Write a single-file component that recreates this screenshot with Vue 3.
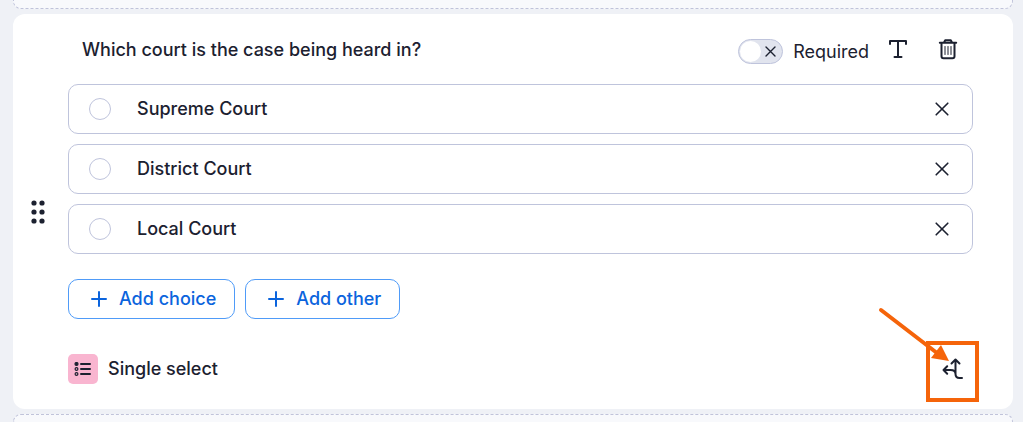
<template>
  <main class="builder">
    <div class="drop-zone drop-zone-top"></div>

    <section class="question-card">
      <button class="icon-btn drag-handle" type="button" aria-label="Move question">
        <svg width="16" height="24" viewBox="0 0 16 24" fill="currentColor">
          <template v-for="y in [3, 12, 21]" :key="y">
            <circle cx="4" :cy="y" r="2.6" />
            <circle cx="12" :cy="y" r="2.6" />
          </template>
        </svg>
      </button>

      <div class="question-body">
        <header class="question-header">
          <h2 class="question-title">Which court is the case being heard in?</h2>
          <div class="question-tools">
            <label class="required-toggle">
              <input v-model="required" class="toggle-input" type="checkbox" />
              <span class="toggle-track">
                <span class="toggle-knob"></span>
                <svg class="toggle-cross" width="11" height="11" viewBox="0 0 11 11">
                  <path d="M1 1l9 9M10 1l-9 9" />
                </svg>
              </span>
              <span>Required</span>
            </label>
            <button class="icon-btn" type="button" aria-label="Text format">
              <svg width="20" height="20" viewBox="0 0 20 20">
                <path d="M2 5V2h16v3M10 2v16M6.500 18h7" />
              </svg>
            </button>
            <button class="icon-btn" type="button" aria-label="Delete question">
              <svg width="20" height="22" viewBox="0 0 20 22">
                <path d="M1.800 4.800h16.400M6 4.500L7.200 2.200h5.600l1.200 2.300M3.500 4.800V18.200a2 2 0 0 0 2 2h9a2 2 0 0 0 2-2V4.800" />
                <path class="thin" d="M7 8.500v8M10 8.500v8M13 8.500v8" />
              </svg>
            </button>
          </div>
        </header>

        <ul class="choice-list">
          <li v-for="choice in choices" :key="choice.id" class="choice">
            <label class="choice-label">
              <input v-model="selected" class="choice-radio" type="radio" name="court" :value="choice.id" />
              <span>{{ choice.label }}</span>
            </label>
            <button class="icon-btn" type="button" :aria-label="'Remove ' + choice.label" @click="removeChoice(choice.id)">
              <svg width="14" height="14" viewBox="0 0 14 14">
                <path d="M1.200 1.200l11.600 11.600M12.800 1.200L1.200 12.800" />
              </svg>
            </button>
          </li>
        </ul>

        <div class="choice-actions">
          <button v-for="action in actions" :key="action" class="add-btn" type="button">
            <svg width="16" height="16" viewBox="0 0 16 16">
              <path d="M8 1v14M1 8h14" />
            </svg>
            {{ action }}
          </button>
        </div>

        <footer class="question-footer">
          <div class="question-type">
            <span class="type-icon">
              <svg width="18" height="14" viewBox="0 0 18 14">
                <path d="M7 2h9M7 7h9M7 12h9" />
                <circle class="filled" cx="2.500" cy="2" r="1.500" />
                <circle cx="2.500" cy="7" r="1.400" />
                <circle cx="2.500" cy="12" r="1.400" />
              </svg>
            </span>
            <span>Single select</span>
          </div>
          <div class="branching">
            <button class="icon-btn" type="button" aria-label="Branching logic">
              <svg width="22" height="22" viewBox="0 0 22 22">
                <path d="M20 20h-2.500c-2.500 0-4-1.500-4-4V2M9.500 5.500l4-4 4 4M1.500 12h7c3 0 5 1.200 5 4M5.200 8.300L1.500 12l3.700 3.700" />
              </svg>
            </button>
            <svg class="callout" width="103" height="96" viewBox="0 0 103 96" aria-hidden="true">
              <rect x="52" y="37" width="49" height="57" />
              <path class="callout-line" d="M5 4l56 43" />
              <path class="callout-head" d="M73 55L65 39 55 52z" />
            </svg>
          </div>
        </footer>
      </div>
    </section>

    <div class="drop-zone drop-zone-bottom"></div>
  </main>
</template>

<script setup>
import { ref } from 'vue'

const required = ref(false)
const selected = ref(null)

const choices = ref([
  { id: 1, label: 'Supreme Court' },
  { id: 2, label: 'District Court' },
  { id: 3, label: 'Local Court' }
])

const actions = ['Add choice', 'Add other']

const removeChoice = (id) => {
  choices.value = choices.value.filter((choice) => choice.id !== id)
}
</script>

<style>
body {
  margin: 0;
  background: #eff1f6;
}
</style>

<style scoped>
.builder {
  display: flex;
  flex-direction: column;
  gap: 5px;
  height: 100vh;
  padding: 0 10px 0 13px;
  box-sizing: border-box;
  overflow: hidden;
  font-family: Inter, sans-serif;
  font-size: 18px;
  font-weight: 500;
  line-height: 24px;
  color: #1c2130;
}

.drop-zone {
  border: 1px dashed #c0c3da;
  background: #f8f9fc;
  box-sizing: border-box;
}

.drop-zone-top {
  flex: 0 0 9px;
  border-top: 0;
  border-radius: 0 0 8px 8px;
}

.drop-zone-bottom {
  flex: 1 0 8px;
  border-bottom: 0;
  border-radius: 8px 8px 0 0;
}

.question-card {
  display: flex;
  align-items: center;
  padding: 0 40px 0 15px;
  border-radius: 12px;
  background: #fff;
}

.icon-btn {
  display: flex;
  align-items: center;
  justify-content: center;
  padding: 0;
  border: 0;
  background: none;
  color: inherit;
  cursor: pointer;
}

svg {
  flex: none;
  fill: none;
  stroke: currentColor;
  stroke-width: 2;
  stroke-linecap: round;
  stroke-linejoin: round;
}

.drag-handle {
  width: 20px;
  margin-right: 20px;
}

.drag-handle svg {
  fill: currentColor;
  stroke: none;
}

.question-body {
  flex: 1;
  min-width: 0;
  padding: 20px 0 25px;
}

.question-header {
  display: flex;
  align-items: flex-start;
  justify-content: space-between;
  min-height: 50px;
  padding: 0 10px 0 14px;
  box-sizing: border-box;
}

.question-title {
  margin: 4px 0 0;
  font-size: inherit;
  font-weight: 500;
}

.question-tools {
  display: flex;
  align-items: center;
  gap: 20px;
}

.question-tools .icon-btn {
  width: 30px;
  height: 30px;
}

.question-tools .thin {
  stroke-width: 1;
}

.required-toggle {
  display: flex;
  align-items: center;
  gap: 10px;
  margin-right: -6px;
  padding-top: 5px;
  font-weight: 400;
  cursor: pointer;
}

.toggle-input {
  position: absolute;
  opacity: 0;
}

.toggle-track {
  display: flex;
  align-items: center;
  justify-content: space-between;
  width: 45px;
  height: 25px;
  padding: 0 6px 0 1px;
  border: 1px solid #bfc4dc;
  border-radius: 13px;
  box-sizing: border-box;
  background: #e1e4ee;
}

.toggle-knob {
  width: 21px;
  height: 21px;
  border-radius: 50%;
  background: #fff;
}

.toggle-cross {
  stroke-width: 1.4;
}

.toggle-input:checked + .toggle-track {
  flex-direction: row-reverse;
  background: #0b64dd;
}

.choice-list {
  display: flex;
  flex-direction: column;
  gap: 10px;
  margin: 0;
  padding: 0;
  list-style: none;
}

.choice {
  display: flex;
  align-items: center;
  justify-content: space-between;
  height: 50px;
  padding: 0 20px;
  border: 1px solid #bfc4dc;
  border-radius: 10px;
  box-sizing: border-box;
}

.choice svg {
  stroke-width: 1.6;
}

.choice .icon-btn {
  width: 20px;
  height: 30px;
}

.choice-label {
  display: flex;
  flex: 1;
  align-items: center;
  gap: 26px;
}

.choice-radio {
  width: 22px;
  height: 22px;
  margin: 0;
  border: 1px solid #bfc4dc;
  border-radius: 50%;
  appearance: none;
}

.choice-radio:checked {
  border: 6px solid #0b64dd;
}

.choice-actions {
  display: flex;
  gap: 10px;
  margin-top: 25px;
}

.add-btn {
  display: flex;
  align-items: center;
  gap: 12px;
  height: 40px;
  padding: 0 18px 0 22px;
  border: 1px solid #4f9bf8;
  border-radius: 10px;
  background: #fff;
  color: #0b64dd;
  font: inherit;
  cursor: pointer;
}

.question-footer {
  display: flex;
  align-items: center;
  justify-content: space-between;
  margin-top: 35px;
}

.question-type {
  display: flex;
  align-items: center;
  gap: 10px;
}

.type-icon {
  display: flex;
  align-items: center;
  justify-content: center;
  width: 30px;
  height: 30px;
  border-radius: 5px;
  background: #f9b5d0;
}

.type-icon circle {
  stroke-width: 1.2;
}

.type-icon .filled {
  fill: currentColor;
}

.branching {
  position: relative;
}

.branching .icon-btn {
  width: 40px;
  height: 30px;
}

/* highlight drawn over the branching button */
.callout {
  position: absolute;
  right: -6px;
  bottom: -18px;
  color: #f5640a;
  stroke-width: 4;
  stroke-linejoin: miter;
  pointer-events: none;
}

.callout-head {
  fill: currentColor;
  stroke: none;
}
</style>
